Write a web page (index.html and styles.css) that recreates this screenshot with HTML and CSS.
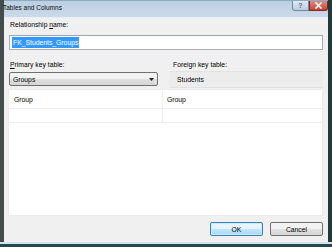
FILE: index.html
```html
<!DOCTYPE html>
<html>
<head>
<meta charset="utf-8">
<link rel="stylesheet" href="styles.css">
</head>
<body>
<div class="window">
  <div class="titlebar">
    <span class="title">Tables and Columns</span>
    <div class="caption-buttons">
      <span class="cap help">?</span>
      <span class="cap close"><svg width="9" height="7" viewBox="0 0 9 7"><path d="M1.5 0.5 L7.5 6.5 M7.5 0.5 L1.5 6.5" stroke="#fff" stroke-width="1.6"/></svg></span>
    </div>
  </div>
  <div class="client">
    <div class="content">
      <div class="label first">Relationship <u>n</u>ame:</div>
      <div class="textbox"><span class="sel">FK_Students_Groups</span></div>
      <div class="tables">
        <div class="col left">
          <div class="label"><u>P</u>rimary key table:</div>
          <div class="combo"><span>Groups</span><svg width="5" height="3" viewBox="0 0 5 3"><path d="M0 0 H5 L2.5 3 Z" fill="#222"/></svg></div>
        </div>
        <div class="col right">
          <div class="label fk-label">Foreign key table:</div>
          <div class="fk">Students</div>
        </div>
      </div>
      <div class="grid">
        <div class="row r1"><div class="cell c1">Group</div><div class="cell c2">Group</div></div>
        <div class="row r2"><div class="cell c1"></div><div class="cell c2"></div></div>
      </div>
    </div>
    <div class="buttons">
      <div class="btn default">OK</div>
      <div class="btn">Cancel</div>
    </div>
  </div>
  <div class="bottom-edge"></div>
</div>
</body>
</html>
```
FILE: styles.css
```css
html, body {
  margin: 0;
  padding: 0;
  background: #f0f0f0;
}
.window {
  width: 332px;
  height: 247px;
  box-sizing: border-box;
  display: flex;
  flex-direction: column;
  border-left: 4px solid #444b4b;
  border-right: 4px solid #22393c;
  background: #f0f0f0;
  font-family: "Liberation Sans", Arial, sans-serif;
  font-size: 6.8px;
  color: #000;
}
.titlebar {
  height: 18px;
  box-sizing: border-box;
  display: flex;
  align-items: flex-start;
  justify-content: space-between;
  background: linear-gradient(#bccfe2, #cbdaea);
  border-top: 1px solid #8fa9c2;
  border-bottom: 1px solid #e6eef6;
}
.title {
  font-size: 6.5px;
  line-height: 14px;
  margin-left: -1px;
  color: #0b0b0b;
}
.caption-buttons {
  display: flex;
  margin-top: 0;
}
.cap {
  height: 10px;
  box-sizing: border-box;
  display: flex;
  align-items: center;
  justify-content: center;
  border: 1px solid #6f8aa5;
  border-top: none;
}
.help {
  width: 17px;
  background: linear-gradient(#dfe9f4, #b9cde2);
  color: #5b6b7c;
  font-size: 7px;
  font-weight: bold;
  border-radius: 0 0 0 3px;
}
.close {
  width: 19px;
  background: linear-gradient(#e08a80, #c4443a);
  border-color: #7a2a24;
  border-radius: 0 0 3px 0;
}
.client {
  flex: 1;
  display: flex;
  flex-direction: column;
  justify-content: space-between;
  padding: 2px 5px 6px 5px;
}
.label {
  line-height: 10px;
  padding-left: 1px;
}
.textbox {
  margin-top: 5px;
  height: 15px;
  box-sizing: border-box;
  background: #fff;
  border: 1px solid #abadb3;
  border-top-color: #a0a6ad;
  display: flex;
  align-items: center;
  padding-left: 2px;
}
.sel {
  background: #3399ff;
  color: #fff;
  line-height: 11px;
  padding: 0 1px;
}
.tables {
  display: flex;
  margin-top: 10px;
}
.col.left {
  width: 149px;
}
.col.right {
  flex: 1;
  margin-left: 12px;
}
.fk-label {
  padding-left: 3px;
}
.combo {
  margin-top: 2px;
  height: 14px;
  box-sizing: border-box;
  border: 1px solid #707070;
  border-radius: 2px;
  background: linear-gradient(#f2f2f2 50%, #e0e0e0 50%, #d6d6d6);
  display: flex;
  align-items: center;
  justify-content: space-between;
  padding: 0 3px 0 3px;
}
.fk {
  margin-top: 1px;
  height: 17px;
  box-sizing: border-box;
  border-top: 1px solid #e2e2e2;
  border-bottom: 1px solid #e2e2e2;
  background: #ececec;
  line-height: 15px;
  padding-left: 7px;
}
.grid {
  margin-top: 1px;
  margin-left: -1px;
  height: 124px;
  background: #fff;
  border: 1px solid #ececec;
  padding-top: 1px;
}
.row {
  display: flex;
  border-bottom: 1px solid #ededed;
}
.r1 {
  height: 17px;
}
.r2 {
  height: 13px;
}
.cell {
  line-height: 17px;
}
.c1 {
  width: 154px;
  padding-left: 5px;
  box-sizing: border-box;
  border-right: 1px solid #ededed;
}
.c2 {
  flex: 1;
  padding-left: 4px;
}
.buttons {
  display: flex;
  justify-content: flex-end;
  gap: 7px;
}
.btn {
  width: 53px;
  height: 14px;
  box-sizing: border-box;
  border: 1px solid #707070;
  border-radius: 2px;
  background: linear-gradient(#f2f2f2 50%, #e2e2e2 50%, #d6d6d6);
  display: flex;
  align-items: center;
  justify-content: center;
}
.btn.default {
  border-color: #3c7fb1;
  background: linear-gradient(#e8f4fc 50%, #bee6fd 50%, #a7d9f5);
  box-shadow: inset 0 0 0 1px #c8ecff;
}
.bottom-edge {
  height: 5px;
  box-sizing: border-box;
  border-top: 2px solid #cfe4f0;
  background: #24494c;
  margin: 0 -4px;
}
```
